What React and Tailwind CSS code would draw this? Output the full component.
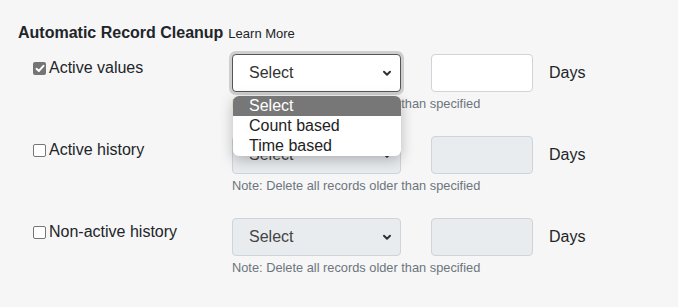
import React from 'react';

const rows = [
  { label: 'Active values', checked: true, enabled: true, open: true },
  { label: 'Active history', checked: false, enabled: false },
  { label: 'Non-active history', checked: false, enabled: false },
];

function Chevron() {
  return (
    <svg width="10" height="7" viewBox="0 0 10 7" className="shrink-0">
      <path d="M2 1.8 L5 4.8 L8 1.8" fill="none" stroke="#333" strokeWidth="2" strokeLinecap="round" strokeLinejoin="round" />
    </svg>
  );
}

function Checkbox({ checked }) {
  if (checked) {
    return (
      <span className="flex h-[13px] w-[13px] shrink-0 items-center justify-center rounded-[2px] bg-[#757575]">
        <svg width="10" height="9" viewBox="0 0 10 9">
          <path d="M1.5 4.8 L3.8 7 L8.5 1.8" fill="none" stroke="#fff" strokeWidth="1.9" strokeLinecap="round" strokeLinejoin="round" />
        </svg>
      </span>
    );
  }
  return <span className="h-[13px] w-[13px] shrink-0 rounded-[2px] border border-[#767676] bg-white" />;
}

function Dropdown() {
  return (
    <div className="absolute left-[1px] top-[42px] z-10 w-[168px] overflow-hidden rounded-[6px] bg-white shadow-[0_4px_14px_rgba(0,0,0,0.25)]">
      {['Select', 'Count based', 'Time based'].map((opt, i) => (
        <div
          key={opt}
          className={`h-[20px] pl-[16px] text-[16px] leading-[20px] ${i === 0 ? 'bg-[#777777] text-white' : 'text-[#222]'}`}
        >
          {opt}
        </div>
      ))}
    </div>
  );
}

export default function App() {
  return (
    <div className="min-h-screen bg-[#f6f6f6] pl-[18px] pt-[24px] font-['Liberation_Sans',Arial,sans-serif] text-[#212529]">
      <div className="flex items-baseline gap-[5px] leading-[18px]">
        <span className="text-[16px] font-bold">Automatic Record Cleanup</span>
        <span className="text-[13px]">Learn More</span>
      </div>

      <div className="mt-[11px] space-y-[24px] pl-[15px]">
        {rows.map((row) => (
          <div key={row.label} className="flex items-start">
            <div className="flex w-[199px] items-center gap-[3px] pt-[3px] text-[16px] leading-[22px]">
              <Checkbox checked={row.checked} />
              <span>{row.label}</span>
            </div>

            <div className="w-[169px]">
              <div className="relative">
                <div
                  className={`flex h-[38px] items-center justify-between rounded-[4px] border pl-[16px] pr-[8px] text-[16px] ${
                    row.open
                      ? 'border-[#555] bg-white text-[#333] shadow-[0_0_0_3px_#cfcfcf]'
                      : 'border-[#ced4da] bg-[#e9ecef] text-[#444]'
                  }`}
                >
                  <span>Select</span>
                  <Chevron />
                </div>
                {row.open && <Dropdown />}
              </div>
              <div className="mt-[4px] whitespace-nowrap text-[12.8px] leading-[16px] text-[#6c757d]">
                Note: Delete all records older than specified
              </div>
            </div>

            <div
              className={`ml-[30px] h-[38px] w-[102px] rounded-[4px] border border-[#ced4da] ${
                row.enabled ? 'bg-white' : 'bg-[#e9ecef]'
              }`}
            />
            <div className="ml-[16px] flex h-[38px] items-center text-[16px]">Days</div>
          </div>
        ))}
      </div>
    </div>
  );
}
